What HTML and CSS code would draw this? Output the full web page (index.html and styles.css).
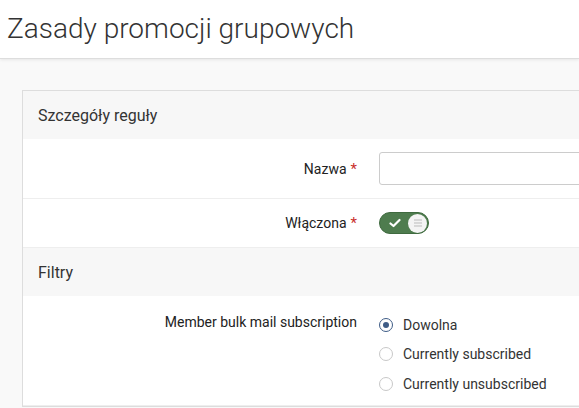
FILE: index.html
```html
<!DOCTYPE html>
<html lang="pl">
<head>
<meta charset="utf-8">
<title>Zasady promocji grupowych</title>
<link rel="stylesheet" href="styles.css">
</head>
<body>
<header class="page-header">
  <h1 class="page-title">Zasady promocji grupowych</h1>
</header>
<main class="page-body">
  <section class="card">
    <div class="section-head">Szczegóły reguły</div>
    <div class="row row-input">
      <label class="row-label">Nazwa<span class="req">*</span></label>
      <div class="row-field"><input class="text-input" type="text"></div>
    </div>
    <div class="row row-toggle">
      <label class="row-label">Włączona<span class="req">*</span></label>
      <div class="row-field">
        <span class="toggle">
          <svg class="toggle-check" width="12" height="10" viewBox="0 0 12 10"><path d="M1.5 5.5 L4.5 8 L10.5 2" fill="none" stroke="#fff" stroke-width="2.2" stroke-linecap="round" stroke-linejoin="round"/></svg>
          <span class="toggle-knob">
            <svg width="10" height="8" viewBox="0 0 10 8"><path d="M1 1H9M1 4H9M1 7H9" stroke="#bbb" stroke-width="1"/></svg>
          </span>
        </span>
      </div>
    </div>
    <div class="section-head">Filtry</div>
    <div class="row row-radios">
      <label class="row-label plain">Member bulk mail subscription</label>
      <div class="row-field radio-list">
        <label class="radio"><span class="radio-dot checked"></span>Dowolna</label>
        <label class="radio"><span class="radio-dot"></span>Currently subscribed</label>
        <label class="radio"><span class="radio-dot"></span>Currently unsubscribed</label>
      </div>
    </div>
  </section>
</main>
</body>
</html>
```

FILE: styles.css
```css
html, body {
  margin: 0;
  padding: 0;
}
body {
  background: #f9f9f9;
  font-family: Roboto, "Liberation Sans", Arial, sans-serif;
  color: #222;
  width: 579px;
  height: 408px;
  overflow: hidden;
}
.page-header {
  background: #fff;
  height: 58px;
  border-bottom: 1px solid #ddd;
  box-shadow: 0 1px 3px rgba(0,0,0,0.08);
  display: flex;
  align-items: center;
  padding-left: 7px;
}
.page-title {
  margin: 0;
  font-weight: 300;
  font-size: 28px;
  color: #333;
  position: relative;
  top: -1px;
}
.page-body {
  padding: 31px 0 0 22px;
}
.card {
  background: #fff;
  border: 1px solid #ddd;
  border-right: none;
  width: 620px;
}
.section-head {
  background: #f7f7f7;
  height: 48px;
  display: flex;
  align-items: center;
  padding-left: 15px;
  font-size: 16px;
  color: #333;
}
.row {
  display: grid;
  grid-template-columns: 334px 1fr;
  column-gap: 22px;
  padding: 13px 0;
  border-bottom: 1px solid #eee;
}
.row-input, .row-toggle {
  align-items: center;
}
.row-label {
  text-align: right;
  font-size: 14px;
  color: #222;
}
.row-label.plain {
  padding-top: 4px;
}
.req {
  color: #c9302c;
  margin-left: 4px;
  font-size: 15px;
}
.text-input {
  display: block;
  width: 260px;
  height: 33px;
  box-sizing: border-box;
  border: 1px solid #ccc;
  border-radius: 3px;
  background: #fff;
  margin: 0;
}
.toggle {
  display: flex;
  align-items: center;
  justify-content: space-between;
  width: 50px;
  height: 22px;
  box-sizing: border-box;
  border-radius: 11px;
  background: #4e7c4e;
  border: 1px solid #3f6a3f;
  padding: 0 1px 0 9px;
}
.toggle-knob {
  width: 19px;
  height: 19px;
  border-radius: 50%;
  background: #f4f4f4;
  display: flex;
  align-items: center;
  justify-content: center;
}
.row-radios {
  padding-top: 14px;
  padding-bottom: 6px;
}
.radio-list {
  display: flex;
  flex-direction: column;
}
.radio {
  display: flex;
  align-items: center;
  height: 29.5px;
  font-size: 14px;
  color: #333;
}
.radio-dot {
  width: 14px;
  height: 14px;
  box-sizing: border-box;
  border: 1px solid #c8c8c8;
  border-radius: 50%;
  margin-right: 10px;
  background: #fff;
  position: relative;
}
.radio-dot.checked {
  border: 1.5px solid #3e5c86;
}
.radio-dot.checked::after {
  content: "";
  position: absolute;
  left: 50%;
  top: 50%;
  width: 6px;
  height: 6px;
  margin: -3px 0 0 -3px;
  border-radius: 50%;
  background: #3e5c86;
}
```
